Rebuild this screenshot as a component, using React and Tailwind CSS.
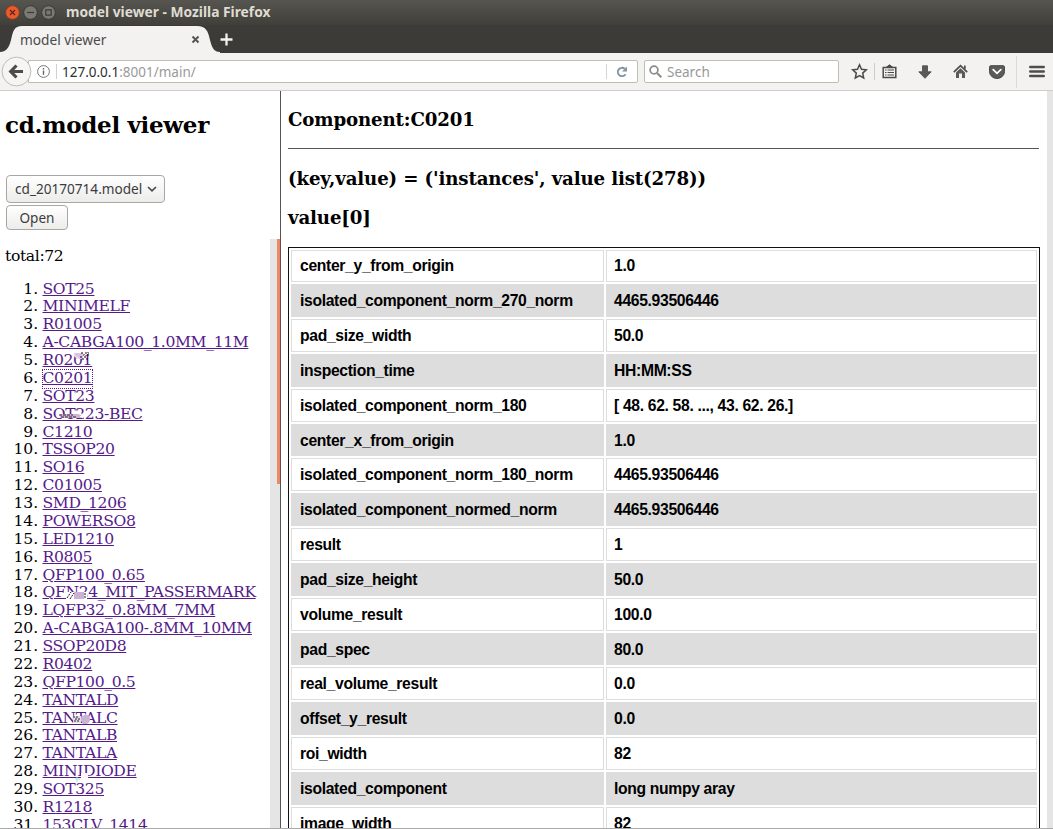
const components = [
  "SOT25", "MINIMELF", "R01005", "A-CABGA100_1.0MM_11M", "R0201", "C0201", "SOT23", "SOT223-BEC",
  "C1210", "TSSOP20", "SO16", "C01005", "SMD_1206", "POWERSO8", "LED1210", "R0805", "QFP100_0.65",
  "QFN24_MIT_PASSERMARK", "LQFP32_0.8MM_7MM", "A-CABGA100-.8MM_10MM", "SSOP20D8", "R0402",
  "QFP100_0.5", "TANTALD", "TANTALC", "TANTALB", "TANTALA", "MINIDIODE", "SOT325", "R1218", "153CLV_1414",
];

const rows = [
  ["center_y_from_origin", "1.0"],
  ["isolated_component_norm_270_norm", "4465.93506446"],
  ["pad_size_width", "50.0"],
  ["inspection_time", "HH:MM:SS"],
  ["isolated_component_norm_180", "[ 48. 62. 58. ..., 43. 62. 26.]"],
  ["center_x_from_origin", "1.0"],
  ["isolated_component_norm_180_norm", "4465.93506446"],
  ["isolated_component_normed_norm", "4465.93506446"],
  ["result", "1"],
  ["pad_size_height", "50.0"],
  ["volume_result", "100.0"],
  ["pad_spec", "80.0"],
  ["real_volume_result", "0.0"],
  ["offset_y_result", "0.0"],
  ["roi_width", "82"],
  ["isolated_component", "long numpy aray"],
  ["image_width", "82"],
];

/* Leftover pointer-trail specks drawn over a few of the links. */
const smudges = {
  4: (
    <svg className="absolute left-[30px] -top-px h-4 w-5" viewBox="0 0 20 16">
      <path d="M1 2h9v6H3z" fill="#dcc3e2" />
      <path d="M8 2h2M12 2h4M10 4h2M14 4h2M7 6h2M11 6h2M9 8h2M13 8h2" stroke="#151019" />
      <path d="M2 5l5 4M11 5l4-3" stroke="#fff" />
    </svg>
  ),
  7: (
    <svg className="absolute left-[15px] top-1.5 h-2 w-8" viewBox="0 0 32 8">
      <path d="M2 2h20v4H2z" fill="#cdb6d2" />
      <path d="M1 3h14M3 5h16" stroke="#37243f" strokeDasharray="3 1" />
      <path d="M21 1l4 3M24 6l4-5" stroke="#fff" strokeWidth="2" />
    </svg>
  ),
  17: (
    <svg className="absolute left-[23px] top-1.5 h-3 w-6" viewBox="0 0 24 12">
      <path d="M0 2h21v7H0z" fill="#fff" />
      <path d="M8 2h10v7H8z" fill="#ccb2d2" />
      <path d="M1 8l4-6M4 9l4-6M19 3v6" stroke="#1c1420" strokeDasharray="2 1" />
    </svg>
  ),
  24: (
    <svg className="absolute left-[30px] top-1 h-3 w-5" viewBox="0 0 20 12">
      <path d="M0 2h8v7H0z" fill="#e5dce8" />
      <path d="M8 3l3-2h4l2 3v3l-3 3h-4l-2-3z" fill="#cbb3d3" />
      <path d="M0 3h6M2 5h6M1 7h6" stroke="#2a2030" strokeDasharray="2 1" />
    </svg>
  ),
  27: (
    <svg className="absolute left-[31px] top-2 h-3 w-4" viewBox="0 0 16 12">
      <path d="M7 2h7v5H7z" fill="#fdf7fe" />
      <path d="M1 8h5M3 6v5" stroke="#a5e4ea" />
    </svg>
  ),
};

function WindowButton({ close, children }) {
  return (
    <svg className="h-[15px] w-[15px]" viewBox="0 0 15 15" fill="none">
      <circle cx="7.5" cy="7.5" r="6.8" fill={close ? "#ea5b2c" : "#7b7973"} stroke={close ? "#8e3d20" : "#34332f"} strokeWidth="0.8" />
      <g stroke={close ? "#5b2413" : "#3c3b37"} strokeWidth="1.2">{children}</g>
    </svg>
  );
}

function TitleBar() {
  return (
    <div className="flex h-[25px] items-center bg-linear-to-b from-[#56554f] to-[#403f3a] pb-px pl-[5px]">
      <div className="flex gap-[3px]">
        <WindowButton close><path d="M5 5l5 5M10 5l-5 5" /></WindowButton>
        <WindowButton><path d="M4 7.500h7" /></WindowButton>
        <WindowButton><path d="M4.800 4.800h5.400v5.400H4.800z" /></WindowButton>
      </div>
      <span className="ml-[10px] text-[13.800px] font-bold leading-none text-[#dfdbd2]">model viewer - Mozilla Firefox</span>
    </div>
  );
}

function TabStrip() {
  return (
    <div className="flex h-[28px] bg-[#3c3b37]">
      <div className="relative h-[28px] w-[220px]">
        <svg className="absolute inset-0 h-[28px] w-[220px]" viewBox="0 0 220 28">
          <path d="M0 28V27C6 27 9 23 11 15C13 6 14 1 22 1H197C206 1 208 6 210 15C212 23 214 27 220 27V28Z" fill="#f3f2f1" />
        </svg>
        <div className="relative flex h-full items-center pl-[20px] pt-px">
          <span className="w-[171px] text-[13.700px] leading-none text-[#4b4b4b]">model viewer</span>
          <svg className="h-[9px] w-[9px]" viewBox="0 0 9 9"><path d="M1.500 1.500l6 6M7.500 1.500l-6 6" stroke="#555" strokeWidth="2" /></svg>
        </div>
      </div>
      <svg className="mt-[8px] h-[13px] w-[13px]" viewBox="0 0 13 13"><path d="M6.500 .5v12M.5 6.500h12" stroke="#f4f2ee" strokeWidth="2.300" /></svg>
    </div>
  );
}

function Toolbar() {
  return (
    <div className="flex h-[38px] items-center border-b border-[#cfcecc] bg-[#f3f2f1]">
      <svg className="z-10 ml-[1px] h-[31px] w-[31px]" viewBox="0 0 31 31" fill="none">
        <circle cx="15.5" cy="15.5" r="14.4" fill="#f6f5f4" stroke="#bdbcb9" />
        <path d="M15.500 9.500l-5.800 6 5.800 6M10.500 15.500H22" stroke="#4c4c4c" strokeWidth="3.200" />
      </svg>
      <div className="-ml-[4px] flex h-[23px] w-[610px] items-center rounded-r-[2px] border border-[#bfbeb5] bg-white">
        <svg className="ml-[8px] h-[13px] w-[13px]" viewBox="0 0 13 13" fill="none">
          <circle cx="6.5" cy="6.5" r="5.9" stroke="#777" />
          <path d="M6.500 5.500v4.300M6.500 3v1.500" stroke="#666" strokeWidth="1.400" />
        </svg>
        <span className="ml-[6px] h-[15px] w-px bg-[#d0d0d0]" />
        <span className="ml-[5px] pt-[2px] text-[13.500px] leading-none text-[#9a9a9a]"><span className="text-[#2e2e2e]">127.0.0.1</span>:8001/main/</span>
        <span className="ml-auto h-[15px] w-px bg-[#d5d5d5]" />
        <svg className="ml-[9px] mr-[9px] h-[12px] w-[12px]" viewBox="0 0 12 12" fill="none">
          <path d="M9.600 8.200A4.200 4.200 0 1 1 8.800 2.800" stroke="#7f94a2" strokeWidth="1.800" />
          <path d="M11 .6v5H6z" fill="#7f94a2" />
        </svg>
      </div>
      <div className="ml-[6px] flex h-[23px] w-[195px] items-center rounded-[2px] border border-[#bfbeb5] bg-white pl-[4px]">
        <svg className="h-[13px] w-[13px]" viewBox="0 0 13 13" fill="none">
          <circle cx="5" cy="5" r="3.9" stroke="#8b8b8b" strokeWidth="1.7" />
          <path d="M8 8l4.300 4.300" stroke="#8b8b8b" strokeWidth="2" />
        </svg>
        <span className="ml-[5px] pt-[2px] text-[13.500px] leading-none text-[#989898]">Search</span>
      </div>
      <svg className="ml-[12px] h-[17px] w-[17px]" viewBox="0 0 17 17" fill="none">
        <path d="M8.500 1.800l2 4.500 4.800.5-3.600 3.300 1 4.900-4.200-2.500L4.300 15l1-4.900L1.700 6.800l4.800-.5z" stroke="#4a4a4a" strokeWidth="1.500" />
      </svg>
      <span className="ml-[6px] h-[17px] w-px bg-[#cccbc9]" />
      <svg className="ml-[7px] h-[15px] w-[15px]" viewBox="0 0 15 15" fill="none">
        <path d="M1.200 3.500h12.600v10H1.200z" stroke="#4a4a4a" strokeWidth="1.500" />
        <path d="M4 3.500L7.500 .8 11 3.500z" fill="#4a4a4a" stroke="#4a4a4a" />
        <path d="M3 6h1.500M3 8.500h1.500M3 11h1.500M5.500 6h6.500M5.500 8.500h6.500M5.500 11h6.500" stroke="#4a4a4a" strokeWidth="1.200" />
      </svg>
      <svg className="ml-[21px] h-[14px] w-[14px]" viewBox="0 0 14 14">
        <path d="M4.500 .8h5v6h3.700L7 13.300.8 6.800h3.700z" fill="#5a5a5a" stroke="#464646" strokeWidth=".8" />
      </svg>
      <svg className="ml-[21px] h-[15px] w-[15px]" viewBox="0 0 15 15">
        <path d="M.8 8.200L7.500 1.700l6.700 6.500" fill="none" stroke="#4d4d4d" strokeWidth="1.700" />
        <path d="M3 8.500l4.500-4.300L12 8.500V14H9V9.500H6V14H3z" fill="#5a5a5a" />
        <path d="M11 1.500h1.700v4L11 4z" fill="#4d4d4d" />
      </svg>
      <svg className="ml-[21px] h-[14px] w-[16px]" viewBox="0 0 16 14">
        <path d="M.5 2.200Q.5.700 2 .7h12q1.500 0 1.500 1.500v4.300a7.500 7 0 0 1-15 0z" fill="#5a5a5a" stroke="#484848" />
        <path d="M4.200 4.700L8 8.300l3.800-3.600" fill="none" stroke="#fff" strokeWidth="1.800" strokeLinecap="round" />
      </svg>
      <span className="ml-[11px] h-[32px] w-px bg-[#dcdbd9]" />
      <svg className="ml-[12px] h-[13px] w-[16px]" viewBox="0 0 16 13">
        <path d="M1.300 2h13.400M1.300 6.500h13.400M1.300 11h13.400" stroke="#4d4d4d" strokeWidth="2.600" strokeLinecap="round" />
      </svg>
    </div>
  );
}

function Sidebar() {
  return (
    <aside className="flex w-[281px] flex-none flex-col border-r border-[#555]">
      <div className="h-[148px] flex-none pl-[5px]">
        <h1 className="pt-[20px] text-[23px] font-bold leading-[27px] tracking-[-0.3px]">cd.model viewer</h1>
        <div className="mt-[37px] flex flex-col items-start gap-[2px] pl-px font-['Noto_Sans',sans-serif] text-[13.600px] leading-none text-[#3c3c3c]">
          <button className="flex h-[28px] w-[159px] items-center rounded-[4px] border border-[#a9a7a4] bg-linear-to-b from-white to-[#ececeb] pl-[8px]">
            cd_20170714.model
            <svg className="ml-[5px] h-[6px] w-[10px]" viewBox="0 0 10 6"><path d="M1 1l4 3.800L9 1" fill="none" stroke="#4a4a4a" strokeWidth="1.700" /></svg>
          </button>
          <button className="flex h-[25px] w-[62px] items-center justify-center rounded-[4px] border border-[#a9a7a4] bg-linear-to-b from-white to-[#ececeb]">Open</button>
        </div>
      </div>
      <div className="flex min-h-0 flex-1">
        <div className="min-w-0 flex-1 overflow-hidden pl-[5px] text-[15.600px] tracking-[-0.36px]">
          <p className="pt-[8px] leading-[18px]">total:72</p>
          <ol className="mt-[15.500px] leading-[17.880px]">
            {components.map((name, i) => (
              <li key={name} className="flex h-[17.880px] whitespace-nowrap">
                <span className="w-[33px] flex-none text-right tracking-[-0.1px]">{i + 1}.</span>
                <a className={i === 5 ? "relative ml-[4.500px] h-[18px] text-[#551a8b] underline outline-1 outline-dotted outline-[#551a8b]" : "relative ml-[4.500px] text-[#551a8b] underline"}>
                  {name}
                  {smudges[i]}
                </a>
              </li>
            ))}
          </ol>
        </div>
        <div className="w-[10px] flex-none bg-[#e5e5e5]">
          <div className="ml-auto h-[245px] w-[3px] bg-[#f08763]" />
        </div>
      </div>
    </aside>
  );
}

function Details() {
  return (
    <main className="min-w-0 flex-1 overflow-hidden pl-[7px] pr-[7px] text-[18.200px] font-bold tracking-[-0.14px]">
      <h3 className="pt-[18px] leading-[22px]">Component:C0201</h3>
      <hr className="mt-[17px] w-[751px] border-t border-[#555]" />
      <h3 className="mt-[19px] leading-[22px]">(key,value) = ('instances', value list(278))</h3>
      <h3 className="mt-[17px] leading-[22px]">value[0]</h3>
      <div className="mt-[17.500px] flex w-[752px] flex-col gap-[2px] border border-[#111] p-[2px] font-['Liberation_Sans',Arial,sans-serif] text-[15.700px] leading-[17px] tracking-[-0.33px]">
        {rows.map(([key, value], i) => (
          <div key={key} className="flex h-[32.840px] flex-none gap-[2px]">
            <div className={i % 2 ? "flex w-[313px] items-center bg-[#ddd] pl-[9px]" : "flex w-[313px] items-center border border-[#ddd] pl-[8px]"}>{key}</div>
            <div className={i % 2 ? "flex flex-1 items-center bg-[#ddd] pl-[8px]" : "flex flex-1 items-center border border-[#ddd] pl-[7px]"}>{value}</div>
          </div>
        ))}
      </div>
    </main>
  );
}

export default function App() {
  return (
    <div className="flex h-[829px] w-[1053px] flex-col overflow-hidden bg-white font-['Noto_Sans',sans-serif]">
      <TitleBar />
      <TabStrip />
      <Toolbar />
      <div className="flex min-h-0 flex-1 font-['DejaVu_Serif',serif] text-black">
        <Sidebar />
        <Details />
        <div className="w-[6px] flex-none bg-[#e5e5e5]" />
      </div>
      <div className="h-px flex-none bg-[#aaa]" />
    </div>
  );
}
